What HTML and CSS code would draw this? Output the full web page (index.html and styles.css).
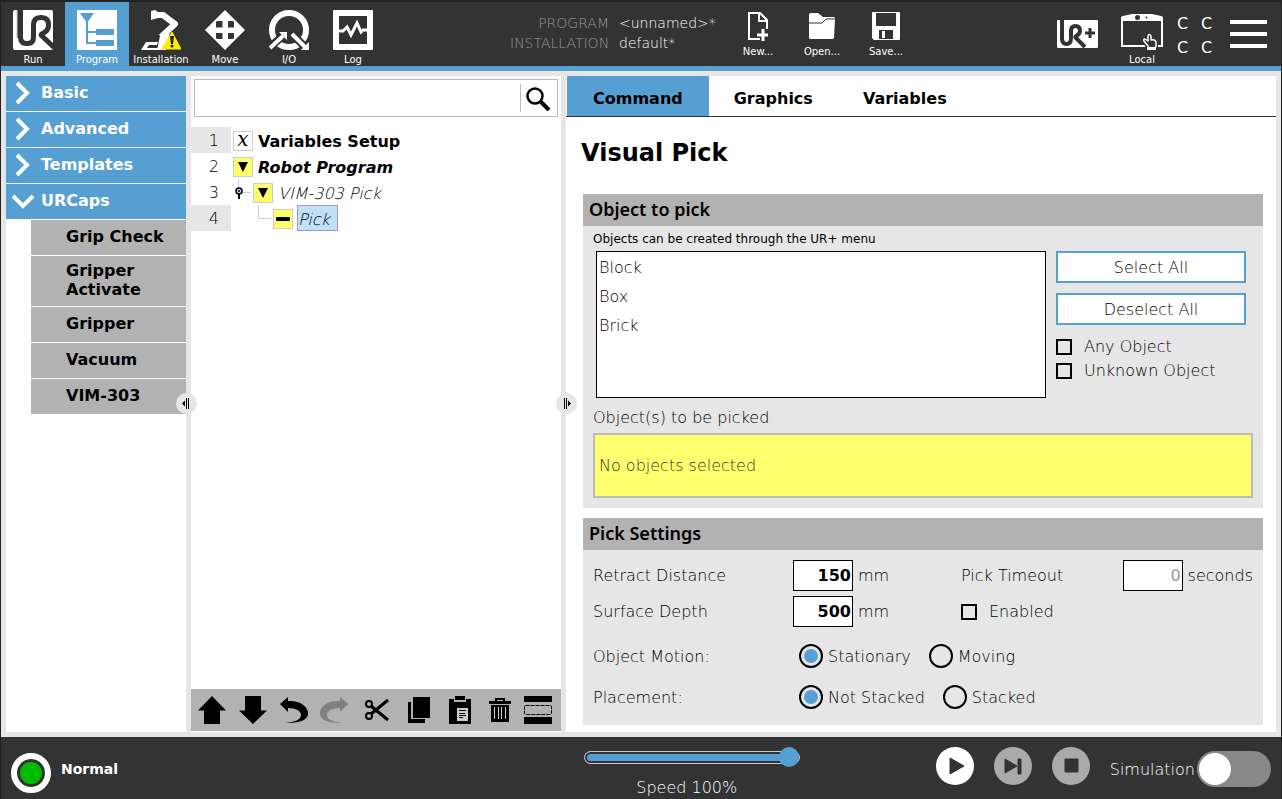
FILE: index.html
```html
<!DOCTYPE html>
<html lang="en">
<head>
    <meta charset="UTF-8" />
    <meta name="viewport" content="width=device-width, initial-scale=1.0" />
    <title>Robot Program</title>
    <link rel="stylesheet" href="styles.css">
</head>
<body>

    <header class="topbar">
        <nav class="main-tabs">
            <button class="top-btn">
                <svg width="40" height="40" viewBox="0 0 40 40">
                    <rect width="40" height="40" rx="2" fill="#fff"/>
                    <path d="M4.500 0V28" stroke="#888" stroke-width="1.500"/>
                    <path d="M7.500 0V27q0 6.500 6 6.500h1q6 0 6-6.500V15q0-7.500 7-7.500h1q7 0 7 7.500 0 6-6 8.500-2 1-1 2L41 37.500" fill="none" stroke="#333" stroke-width="5"/>
                </svg>
                <span>Run</span>
            </button>
            <button class="top-btn active">
                <svg width="40" height="40" viewBox="0 0 40 40">
                    <rect width="40" height="40" fill="#fff"/>
                    <path d="M3 3h14l-7 10zM19 19h18v6H19zM19 30h18v6H19z" fill="#569fd3"/>
                    <path d="M10 12v21h9M10 22h9" fill="none" stroke="#569fd3" stroke-width="2"/>
                </svg>
                <span>Program</span>
            </button>
            <button class="top-btn">
                <svg width="40" height="40" viewBox="0 0 40 40">
                    <path d="M0 40l5-8h12l-1 3H8l-2 3h12v2z" fill="#fff"/>
                    <path d="M16 40l3-14 4-4 6-1-4 19z" fill="#fff"/>
                    <path d="M14 5h8l12 9-14 13" fill="none" stroke="#fff" stroke-width="6" stroke-linejoin="round"/>
                    <path d="M10 1l4-1 3 2v6l-7 2z" fill="#fff"/>
                    <path d="M31 22l9 17H21z" fill="#ffed00" stroke="#ffed00" stroke-linejoin="round"/>
                    <path d="M29 26h4l-1 8h-2z" fill="#222"/>
                    <circle cx="31" cy="36" r="1.500" fill="#222"/>
                </svg>
                <span>Installation</span>
            </button>
            <button class="top-btn">
                <svg width="40" height="40" viewBox="0 0 40 40">
                    <path d="M20 0l20 20-20 20L0 20z" fill="#fff"/>
                    <path d="M12 11h5.500v6.500H11V12zM23 11h5l1 1v5.500h-6zM11 23h6.500v6H12l-1-1zM23 23h6v5l-1 1h-5z" fill="#333"/>
                </svg>
                <span>Move</span>
            </button>
            <button class="top-btn">
                <svg width="40" height="40" viewBox="0 0 40 40">
                    <circle cx="20" cy="20" r="17" fill="none" stroke="#fff" stroke-width="6"/>
                    <path d="M0 38L16 24M23 24l16 16" stroke="#333" stroke-width="8"/>
                    <path d="M1 38L14 26M23 24l13 13" stroke="#fff" stroke-width="4"/>
                    <path d="M10 22h8v8zM40 32v8h-8z" fill="#fff"/>
                </svg>
                <span>I/O</span>
            </button>
            <button class="top-btn">
                <svg width="40" height="40" viewBox="0 0 40 40">
                    <rect width="40" height="40" rx="1" fill="#fff"/>
                    <rect x="6" y="6" width="28" height="28" fill="#333"/>
                    <path d="M6 21h4l4-4 4 8 6-12 4 9 2-2h4" fill="none" stroke="#fff" stroke-width="3"/>
                </svg>
                <span>Log</span>
            </button>
        </nav>

        <div class="file-area">
            <dl class="file-names">
                <dt>PROGRAM</dt>
                <dd>&lt;unnamed&gt;*</dd>
                <dt>INSTALLATION</dt>
                <dd>default*</dd>
            </dl>
            <button class="top-btn file-btn">
                <svg width="28" height="30" viewBox="0 0 28 30">
                    <path d="M16 28H5V2h11l7 7v9" fill="none" stroke="#fff" stroke-width="2"/>
                    <path d="M15 2v8h8" fill="none" stroke="#fff" stroke-width="2"/>
                    <path d="M19 18v12M13 24h11" stroke="#fff" stroke-width="3"/>
                </svg>
                <span>New...</span>
            </button>
            <button class="top-btn file-btn">
                <svg width="28" height="30" viewBox="0 0 28 30">
                    <path d="M1 4q0-2 2-2h7l5 4h11q1 0 1 2L26 27q0 1-2 1H3q-2 0-2-1z" fill="#fff"/>
                    <path d="M0 12h14l4-4h10" fill="none" stroke="#333"/>
                </svg>
                <span>Open...</span>
            </button>
            <button class="top-btn file-btn">
                <svg width="28" height="30" viewBox="0 0 28 30">
                    <path d="M1 1h26q1 0 1 1v26q0 1-1 1H2l-2-2V2q0-1 1-1z" fill="#fff"/>
                    <path d="M4 2h20v13H4zM7 19h14v9H7z" fill="#333"/>
                    <path d="M10 20h3v7h-3z" fill="#fff"/>
                </svg>
                <span>Save...</span>
            </button>
        </div>

        <div class="system-area">
            <button class="plain-btn" aria-label="URCaps">
                <svg width="42" height="28" viewBox="0 0 42 28">
                    <rect width="41" height="28" rx="1" fill="#fff"/>
                    <path d="M5 0v18q0 6 4.500 6t4.500-6v-7q0-5 4.500-5t4.500 5q0 3-4 5-1 1 0 2l9 9" fill="none" stroke="#333" stroke-width="4"/>
                    <path d="M33 8v10M28 13h10" stroke="#333" stroke-width="3"/>
                </svg>
            </button>
            <button class="top-btn local-btn">
                <svg width="42" height="40" viewBox="0 0 42 40">
                    <path d="M0 8q0-2 2-2l9-2h20l9 2q2 0 2 2v29H0z" fill="#fff"/>
                    <path d="M2 11h38v24H2z" fill="#333"/>
                    <circle cx="16.500" cy="7.500" r="2.500" fill="#333"/>
                    <circle cx="25.500" cy="7.500" r="1" fill="#333"/>
                    <path d="M21 30l4-2v-5h6v5l6 3v9H26z" fill="#333"/>
                    <path d="M27 39v-3l-4-5q-1-2 1-2l3 2v-5q1-3 3 0v4q4-1 5 2v4l-1 3z" fill="#333" stroke="#fff" stroke-width="1.500" stroke-linejoin="round"/>
                    <path d="M26 37h9v3h-9z" fill="#fff"/>
                </svg>
                <span>Local</span>
            </button>
            <div class="checksum">
                <span>C</span><span>C</span><span>C</span><span>C</span>
            </div>
            <button class="menu-btn" aria-label="Menu">
                <span></span><span></span><span></span>
            </button>
        </div>
    </header>

    <main class="workspace">
        <aside class="sidebar">
            <button class="group">
                <svg width="24" height="24" viewBox="0 0 24 24"><path d="M6 2l10 10L6 22"/></svg>
                Basic
            </button>
            <button class="group">
                <svg width="24" height="24" viewBox="0 0 24 24"><path d="M6 2l10 10L6 22"/></svg>
                Advanced
            </button>
            <button class="group">
                <svg width="24" height="24" viewBox="0 0 24 24"><path d="M6 2l10 10L6 22"/></svg>
                Templates
            </button>
            <button class="group">
                <svg width="24" height="24" viewBox="0 0 24 24"><path d="M2 7l10 10L22 7"/></svg>
                URCaps
            </button>
            <div class="caps">
                <button class="cap">Grip Check</button>
                <button class="cap">Gripper Activate</button>
                <button class="cap">Gripper</button>
                <button class="cap">Vacuum</button>
                <button class="cap">VIM-303</button>
            </div>
            <button class="handle handle-left" aria-label="Collapse node list">
                <svg width="21" height="21" viewBox="0 0 21 21"><path d="M6 10.500l3-3v6zM10 5h1v11h-1zM12 5h1v11h-1z"/></svg>
            </button>
        </aside>

        <section class="tree-panel">
            <div class="search-box">
                <input type="text" aria-label="Search program">
                <button aria-label="Search">
                    <svg width="26" height="26" viewBox="0 0 26 26">
                        <circle cx="9" cy="11" r="7.500" fill="none" stroke="#000" stroke-width="2.500"/>
                        <path d="M14 16l9 9" stroke="#000" stroke-width="4"/>
                    </svg>
                </button>
            </div>

            <ol class="tree">
                <li>
                    <span class="line-no shaded">1</span>
                    <span class="node-icon var-icon">x</span>
                    <span class="node strong">Variables Setup</span>
                </li>
                <li>
                    <span class="line-no">2</span>
                    <span class="node-icon"><svg width="18" height="18" viewBox="0 0 18 18"><path d="M4 4h10L9 14z"/></svg></span>
                    <span class="node strong italic">Robot Program</span>
                </li>
                <li>
                    <span class="line-no">3</span>
                    <svg class="branch" width="20" height="26" viewBox="0 0 20 26">
                        <path d="M7.500 0v13M11 13.500h9" stroke="#c8c8ff" fill="none"/>
                        <path d="M8 12v8" stroke="#000" stroke-width="2"/>
                        <circle cx="8" cy="12" r="3" fill="#c8c8ff" stroke="#000" stroke-width="1.500"/>
                        <circle cx="8" cy="12" r="1"/>
                    </svg>
                    <span class="node-icon"><svg width="18" height="18" viewBox="0 0 18 18"><path d="M4 4h10L9 14z"/></svg></span>
                    <span class="node italic">VIM-303 Pick</span>
                </li>
                <li>
                    <span class="line-no shaded">4</span>
                    <svg class="branch" width="40" height="26" viewBox="0 0 40 26">
                        <path d="M27.500 0v13.500H40" stroke="#c8c8ff" fill="none"/>
                    </svg>
                    <span class="node-icon"><svg width="18" height="18" viewBox="0 0 18 18"><rect x="2" y="7" width="14" height="4" rx="1"/></svg></span>
                    <span class="node italic selected">Pick</span>
                </li>
            </ol>

            <div class="toolbar">
                <button aria-label="Move up">
                    <svg width="28" height="28" viewBox="0 0 28 28"><path d="M14 0l14 14.500h-6V28H6V14.500H0z"/></svg>
                </button>
                <button aria-label="Move down">
                    <svg width="28" height="28" viewBox="0 0 28 28"><path d="M14 28L0 14.500h6V0h16v14.500h6z"/></svg>
                </button>
                <button aria-label="Undo">
                    <svg width="28" height="28" viewBox="0 0 28 28"><path d="M0 8l8-7v4c11-1 20 5 20 12 0 8-10 10-22 10 8-1 15-3 15-8 0-4-5-7-13-7v4z"/></svg>
                </button>
                <button aria-label="Redo" disabled>
                    <svg width="28" height="28" viewBox="0 0 28 28"><path d="M28 8l-8-7v4C9 4 0 10 0 17c0 8 10 10 22 10-8-1-15-3-15-8 0-4 5-7 13-7v4z" fill="#808080"/></svg>
                </button>
                <button aria-label="Cut">
                    <svg width="28" height="28" viewBox="-5 0 28 28">
                        <g fill="none" stroke="#000">
                            <circle cx="3" cy="8" r="3" stroke-width="2"/>
                            <circle cx="3" cy="20" r="3" stroke-width="2"/>
                            <path d="M5 10l17 14M5 18L22 4" stroke-width="3"/>
                        </g>
                    </svg>
                </button>
                <button aria-label="Copy">
                    <svg width="28" height="28" viewBox="-3 0 28 28"><path d="M3 6h3v17h14v4H3zM8 1h17v21H8z"/></svg>
                </button>
                <button aria-label="Paste">
                    <svg width="28" height="28" viewBox="-3 0 28 28">
                        <path d="M3 3h5v3h12V3h5v25H3zM9 0h10v4H9z"/>
                        <path d="M11 12h11v13H11z" fill="#ccc"/>
                        <path d="M13 14.500h7M13 17.500h6M13 19.500h7M13 21.500h4" stroke="#000"/>
                    </svg>
                </button>
                <button aria-label="Delete">
                    <svg width="28" height="28" viewBox="-3 0 28 28">
                        <path d="M3 5h22v3H3zM5 9h18v17H5z"/>
                        <path d="M10 5V3h8v2" fill="none" stroke="#000" stroke-width="2"/>
                        <path d="M8.500 11v12M12.500 11v12M15.500 11v12M19.500 11v12" stroke="#ccc"/>
                    </svg>
                </button>
                <button aria-label="Suppress">
                    <svg width="28" height="28" viewBox="0 0 28 28">
                        <path d="M0 0h28v6H0zM0 21h28v7H0z"/>
                        <rect x=".5" y="9.500" width="27" height="9" rx="1" fill="none" stroke="#000" stroke-dasharray="4 1"/>
                    </svg>
                </button>
            </div>
        </section>

        <section class="detail">
            <button class="handle handle-right" aria-label="Collapse program tree">
                <svg width="21" height="21" viewBox="0 0 21 21"><path d="M15 10.500l-3-3v6zM8 5h1v11H8zM10 5h1v11h-1z"/></svg>
            </button>
            <nav class="detail-tabs">
                <button class="active">Command</button>
                <button>Graphics</button>
                <button>Variables</button>
            </nav>

            <h1>Visual Pick</h1>

            <section class="card">
                <h2>Object to pick</h2>
                <div class="object-body">
                    <label class="hint" for="objects">Objects can be created through the UR+ menu</label>
                    <div class="object-row">
                        <select id="objects" size="4" multiple>
                            <option>Block</option>
                            <option>Box</option>
                            <option>Brick</option>
                        </select>
                        <div class="object-actions">
                            <button>Select All</button>
                            <button>Deselect All</button>
                            <label class="check"><input type="checkbox">Any Object</label>
                            <label class="check"><input type="checkbox">Unknown Object</label>
                        </div>
                    </div>
                    <p class="picked-title">Object(s) to be picked</p>
                    <div class="picked">No objects selected</div>
                </div>
            </section>

            <section class="card">
                <h2>Pick Settings</h2>
                <div class="settings">
                    <label for="retract">Retract Distance</label>
                    <div class="field"><input type="text" id="retract" value="150"> mm</div>
                    <div class="field timeout">
                        <label for="timeout">Pick Timeout</label>
                        <input type="text" id="timeout" value="0" disabled> seconds
                    </div>

                    <label for="depth">Surface Depth</label>
                    <div class="field"><input type="text" id="depth" value="500"> mm</div>
                    <label class="check"><input type="checkbox">Enabled</label>

                    <span>Object Motion:</span>
                    <div class="radios">
                        <label><input type="radio" name="motion" checked>Stationary</label>
                        <label><input type="radio" name="motion">Moving</label>
                    </div>

                    <span>Placement:</span>
                    <div class="radios">
                        <label><input type="radio" name="placement" checked>Not Stacked</label>
                        <label><input type="radio" name="placement">Stacked</label>
                    </div>
                </div>
            </section>
        </section>
    </main>

    <footer class="bottombar">
        <div class="status"><span class="lamp"></span>Normal</div>
        <div class="speed">
            <input type="range" id="speed" min="0" max="100" value="100">
            <label for="speed">Speed 100%</label>
        </div>
        <div class="controls">
            <button class="round play" aria-label="Play">
                <svg width="38" height="38" viewBox="0 0 38 38"><path d="M14 11l14 8-14 8z"/></svg>
            </button>
            <button class="round" aria-label="Step">
                <svg width="38" height="38" viewBox="0 0 38 38"><path d="M11 12l12 7-12 7zM24 12h3v15h-3z"/></svg>
            </button>
            <button class="round" aria-label="Stop">
                <svg width="38" height="38" viewBox="0 0 38 38"><path d="M13 12h13v13H13z"/></svg>
            </button>
            <label class="simulation">Simulation<input type="checkbox"></label>
        </div>
    </footer>

</body>
</html>
```
FILE: styles.css
```css
* {
    box-sizing: border-box;
}

body {
    display: flex;
    flex-direction: column;
    min-height: 100vh;
    margin: 0;
    border: 1px solid #222;
    border-width: 0 1px;
    background-color: #e6e6e6;
    color: #000;
    font-family: "DejaVu Sans Light", "DejaVu Sans", sans-serif;
    font-size: 16px;
    font-weight: 200;
}

button, input, select {
    font: inherit;
    color: inherit;
}

button {
    padding: 0;
    border: none;
    background: none;
    cursor: pointer;
}

svg {
    display: block;
    flex-shrink: 0;
}

/* Header */
.topbar {
    display: flex;
    justify-content: space-between;
    height: 71px;
    border-top: 2px solid #222;
    border-bottom: 5px solid #569fd3;
    background-color: #333;
    color: #fff;
}

.main-tabs {
    display: flex;
}

.top-btn {
    display: flex;
    flex-direction: column;
    align-items: center;
    gap: 4px;
    width: 64px;
    padding-top: 8px;
    font-family: "DejaVu Sans", sans-serif;
    font-size: 10px;
    font-weight: 400;
    line-height: 12px;
}

.top-btn.active {
    background-color: #569fd3;
}

.file-area {
    display: flex;
    padding-right: 14px;
}

.file-names {
    display: grid;
    grid-template-columns: 99px auto;
    align-content: start;
    column-gap: 10px;
    width: 216px;
    margin: 0;
    padding-top: 11px;
    font-size: 14px;
    line-height: 20px;
}

.file-names dt {
    color: #999;
    text-align: right;
}

.file-names dd {
    margin: 0;
}

.file-btn {
    gap: 5px;
    padding-top: 9px;
}

.system-area {
    display: flex;
    align-items: flex-start;
    width: 224px;
}

.plain-btn {
    padding-top: 18px;
}

.local-btn {
    width: 42px;
    margin-left: 22px;
}

.checksum {
    display: grid;
    grid-template-columns: 24px 24px;
    margin-left: 14px;
    padding-top: 10px;
    font-family: "DejaVu Sans", sans-serif;
    font-weight: 400;
    line-height: 24px;
}

.menu-btn {
    display: grid;
    gap: 8px;
    width: 37px;
    margin-left: 5px;
    padding-top: 18px;
}

.menu-btn span {
    height: 4px;
    background-color: #fff;
}

/* Three columns */
.workspace {
    display: flex;
    flex: 1;
    gap: 5px;
    padding: 5px;
}

.sidebar {
    position: relative;
    width: 180px;
    background-color: #fff;
    font-family: "DejaVu Sans", sans-serif;
    font-weight: 700;
}

.group {
    display: flex;
    align-items: center;
    gap: 6px;
    width: 100%;
    height: 36px;
    padding: 0 5px 2px;
    border-bottom: 1px solid #fff;
    background-color: #569fd3;
    color: #fff;
}

.group path {
    fill: none;
    stroke: #fff;
    stroke-width: 4;
}

.caps {
    padding-left: 25px;
}

.cap {
    display: block;
    width: 100%;
    min-height: 36px;
    padding: 5px 15px 7px 35px;
    border-bottom: 1px solid #fff;
    background-color: #b2b2b2;
    line-height: 19px;
    text-align: left;
}

.handle {
    position: absolute;
    top: 50%;
    width: 21px;
    height: 21px;
    margin-top: -11px;
    border-radius: 50%;
    background-color: #e6e6e6;
    z-index: 1;
}

.handle-left {
    right: -11px;
}

.handle-right {
    left: -10px;
}

.tree-panel {
    display: flex;
    flex-direction: column;
    width: 370px;
    padding-bottom: 1px;
    background-color: #fff;
}

.search-box {
    display: flex;
    height: 38px;
    margin: 3px;
    border: 1px solid #bbb;
}

.search-box input {
    flex: 1;
    min-width: 0;
    border: none;
}

.search-box button {
    margin: 4px 0;
    padding: 0 5px;
    border-left: 1px solid #bbb;
}

.tree {
    flex: 1;
    margin: 0;
    padding: 7px 0 0;
    list-style: none;
}

.tree li {
    display: flex;
    align-items: center;
    height: 26px;
}

.line-no {
    width: 40px;
    height: 26px;
    padding-right: 12px;
    line-height: 28px;
    text-align: right;
}

.line-no.shaded {
    background-color: #e6e6e6;
}

.node-icon {
    width: 20px;
    height: 20px;
    margin: 1px 4px 0 2px;
    border: 1px solid #ccc;
    background-color: #ffff6e;
}

.var-icon {
    background-color: #fff;
    font-family: "DejaVu Serif", serif;
    font-size: 20px;
    font-style: italic;
    font-weight: 400;
    line-height: 14px;
    text-align: center;
}

.node {
    height: 26px;
    border: 1px solid transparent;
    line-height: 27px;
}

.strong {
    font-family: "DejaVu Sans", sans-serif;
    font-weight: 700;
}

.italic {
    font-style: italic;
}

.selected {
    padding-right: 7px;
    border-color: #99c;
    background-color: #c2e0f7;
}

.toolbar {
    display: flex;
    justify-content: space-between;
    align-items: center;
    height: 42px;
    padding: 0 9px 0 7px;
    background-color: #b2b2b2;
}

/* Right side */
.detail {
    position: relative;
    flex: 1;
    min-width: 0;
    padding-bottom: 7px;
    background-color: #fff;
}

.detail-tabs {
    display: flex;
    height: 41px;
    padding-left: 1px;
    border-bottom: 1px solid #333;
}

.detail-tabs button {
    padding: 4px 25px 0;
    font-family: "DejaVu Sans", sans-serif;
    font-weight: 700;
}

.detail-tabs .active {
    padding: 4px 26px 0;
    background-color: #569fd3;
}

h1 {
    margin: 21px 15px 25px;
    font-family: "DejaVu Sans", sans-serif;
    font-size: 24px;
    line-height: 31px;
}

.card {
    margin: 0 13px 10px 17px;
    background-color: #e6e6e6;
}

.card:last-child {
    margin-bottom: 0;
}

.card h2 {
    margin: 0;
    padding: 0 6px 2px;
    background-color: #b2b2b2;
    font-family: "Noto Sans", sans-serif;
    font-size: 18px;
    font-weight: 600;
    line-height: 30px;
}

.object-body {
    padding: 4px 10px 10px;
}

.hint {
    display: block;
    font-family: "DejaVu Sans", sans-serif;
    font-size: 12px;
    font-weight: 400;
    line-height: 18px;
}

.object-row {
    display: flex;
    gap: 10px;
    margin: 3px 7px 0 3px;
}

.object-row select {
    flex: 1;
    height: 147px;
    padding: 6px 1px 0;
    border: 1px solid #000;
    border-radius: 0;
    background-color: #fff;
    overflow: hidden;
}

.object-row option {
    min-height: 29px;
    padding: 0 1px;
    line-height: 29px;
}

.object-actions {
    width: 190px;
}

.object-actions button {
    display: block;
    width: 100%;
    height: 32px;
    margin-bottom: 10px;
    border: 2px solid #569fd3;
    background-color: #fff;
}

.check {
    display: flex;
    align-items: center;
    gap: 12px;
    line-height: 24px;
}

.check input {
    appearance: none;
    width: 16px;
    height: 16px;
    margin: 0;
    border: 2px solid #000;
}

.check input:checked {
    background-color: #569fd3;
}

.picked-title {
    margin: 8px 0 3px;
    line-height: 24px;
}

.picked {
    padding: 0 4px;
    border: 2px solid #bbb;
    background-color: #ffff6e;
    color: #333;
    line-height: 61px;
}

.settings {
    display: grid;
    grid-template-columns: 200px 168px 1fr;
    grid-template-rows: 31px 31px 48px 24px;
    align-items: center;
    row-gap: 5px;
    padding: 10px 10px 16px;
}

.field {
    display: flex;
    align-items: center;
    gap: 5px;
}

.field input {
    width: 60px;
    height: 31px;
    padding: 0 1px;
    border: 1px solid #000;
    background-color: #fff;
    font-family: "DejaVu Sans", sans-serif;
    font-weight: 700;
    text-align: right;
}

.field input:disabled {
    color: #999;
    font-weight: 400;
}

.timeout label {
    flex: 1;
}

.radios {
    display: flex;
    grid-column: 2 / 4;
    gap: 18px;
    padding-left: 6px;
}

.radios label {
    display: flex;
    align-items: center;
    gap: 5px;
}

.radios input {
    appearance: none;
    width: 24px;
    height: 24px;
    margin: 0;
    border: 2px solid #000;
    border-radius: 50%;
}

.radios input:checked {
    padding: 3px;
    background-color: #569fd3;
    background-clip: content-box;
}

/* Footer */
.bottombar {
    display: flex;
    height: 62px;
    background-color: #333;
    color: #fff;
}

.status {
    display: flex;
    flex: 1;
    align-items: center;
    gap: 10px;
    padding: 2px 10px 0;
    font-family: "DejaVu Sans", sans-serif;
    font-size: 14px;
    font-weight: 700;
}

.lamp {
    width: 40px;
    height: 40px;
    margin-top: 8px;
    border: 6px solid #fff;
    border-radius: 50%;
    background-color: #00bc00;
    box-shadow: inset 0 0 0 3px #333;
}

.speed {
    display: flex;
    flex-direction: column;
    align-items: center;
    gap: 11px;
    width: 216px;
    margin-right: 136px;
    padding-top: 10px;
    line-height: 20px;
}

.speed label {
    padding-right: 10px;
}

.speed input {
    appearance: none;
    width: 100%;
    height: 20px;
    margin: 0;
    background: none;
}

.speed input::-webkit-slider-runnable-track {
    height: 13px;
    border: 1px solid #ccc;
    border-radius: 7px;
    background-color: #569fd3;
    box-shadow: inset 0 0 0 2px #333;
}

.speed input::-webkit-slider-thumb {
    appearance: none;
    width: 20px;
    height: 20px;
    margin-top: -5px;
    border-radius: 50%;
    background-color: #569fd3;
}

.controls {
    display: flex;
    align-items: center;
    gap: 20px;
    padding: 0 10px 4px 0;
}

.round {
    border-radius: 50%;
    background-color: #aaa;
}

.round path {
    fill: #333;
    stroke: #333;
    stroke-linejoin: round;
}

.play {
    background-color: #fff;
}

.simulation {
    display: flex;
    align-items: center;
    gap: 2px;
    padding-top: 6px;
}

.simulation input {
    appearance: none;
    width: 74px;
    height: 36px;
    margin: 0;
    padding: 2px;
    border-radius: 18px;
    background-color: #888;
}

.simulation input::before {
    content: "";
    display: block;
    width: 32px;
    height: 32px;
    border-radius: 50%;
    background-color: #fff;
}

.simulation input:checked::before {
    margin-left: auto;
}
```
